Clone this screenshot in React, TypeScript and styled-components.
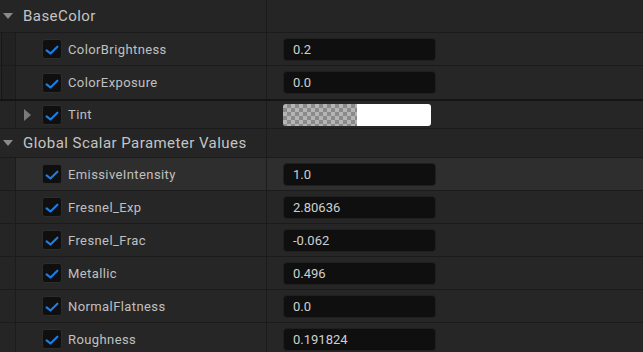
import React from "react";
import styled, { createGlobalStyle } from "styled-components";

const Global = createGlobalStyle`
  html, body { margin: 0; padding: 0; background: #242424; }
  * { box-sizing: border-box; }
`;

const Panel = styled.div`
  width: 643px;
  height: 352px;
  overflow: hidden;
  background: #242424;
  font-family: Roboto, "Noto Sans", "Liberation Sans", sans-serif;
  display: flex;
  flex-direction: column;
`;

const Row = styled.div<{ $h: number; $hl?: boolean; $bw?: number; $header?: boolean }>`
  flex: 0 0 auto;
  display: grid;
  grid-template-columns: 266px 1px 1fr;
  height: ${(p) => p.$h}px;
  background: ${(p) => (p.$header ? "#252525" : p.$hl ? "#2e2e2e" : "#262626")};
  border-bottom: ${(p) => p.$bw ?? 1}px solid ${(p) => ((p.$bw ?? 1) > 1 ? "#141414" : "#1b1b1b")};
`;

const Divider = styled.div`
  background: #1b1b1b;
`;

const HeaderName = styled.div`
  display: flex;
  align-items: center;
  padding-left: 3px;
  gap: 10px;
  color: #c4c4c4;
  font-size: 15px;
  letter-spacing: 0.45px;
`;

const NameCell = styled.div`
  display: flex;
  align-items: stretch;
`;

const Gutter = styled.div<{ $boxed?: boolean }>`
  flex: 0 0 auto;
  width: ${(p) => (p.$boxed ? 15 : 16)}px;
  margin-left: ${(p) => (p.$boxed ? 1 : 0)}px;
  border-right: 1px solid #1b1b1b;
  border-left: ${(p) => (p.$boxed ? "1px solid #161616" : "none")};
  background: ${(p) => (p.$boxed ? "#222222" : "#252525")};
`;

const Expander = styled.div`
  flex: 0 0 26px;
  display: flex;
  align-items: center;
  padding-left: 8px;
`;

const Label = styled.div`
  display: flex;
  align-items: center;
  gap: 6px;
  color: #c0c0c0;
  font-size: 13px;
  letter-spacing: 0.4px;
`;

const CheckBox = styled.div`
  width: 20px;
  height: 20px;
  border-radius: 3px;
  background: #0f0f0f;
  border: 1px solid #2c2c2c;
  display: flex;
  align-items: center;
  justify-content: center;
`;

const ValueCell = styled.div`
  display: flex;
  align-items: center;
  padding-left: 16px;
`;

const Field = styled.div`
  width: 153px;
  height: 23px;
  border-radius: 4px;
  background: #0f0f0f;
  border: 1px solid #1f1f1f;
  color: #cfcfcf;
  font-size: 13px;
  display: flex;
  align-items: center;
  padding-left: 9px;
`;

const Swatch = styled.div`
  width: 148px;
  height: 22px;
  border-radius: 3px;
  overflow: hidden;
  display: grid;
  grid-template-columns: 1fr 1fr;
`;

const Checker = styled.div`
  background-color: #b4b4b4;
  background-image:
    linear-gradient(45deg, #8a8a8a 25%, transparent 25%, transparent 75%, #8a8a8a 75%),
    linear-gradient(45deg, #8a8a8a 25%, transparent 25%, transparent 75%, #8a8a8a 75%);
  background-size: 8px 8px;
  background-position: 0 0, 4px 4px;
`;

const White = styled.div`
  background: #ffffff;
`;

const Check = () => (
  <svg width="20" height="20" viewBox="0 0 20 20">
    <path d="M4 11.5 L8.3 15 L16 7.5" fill="none" stroke="#1f7de6" strokeWidth="2.4" strokeLinecap="round" strokeLinejoin="round" />
  </svg>
);

const DownTri = () => (
  <svg width="10" height="6" viewBox="0 0 10 6">
    <path d="M0 0 L10 0 L5 6 Z" fill="#8a8a8a" />
  </svg>
);

const RightTri = () => (
  <svg width="7" height="12" viewBox="0 0 7 12">
    <path d="M0 0 L7 6 L0 12 Z" fill="#7a7a7a" />
  </svg>
);

type Item = { name: string; value: string; hl?: boolean };

const globals: Item[] = [
  { name: "EmissiveIntensity", value: "1.0", hl: true },
  { name: "Fresnel_Exp", value: "2.80636" },
  { name: "Fresnel_Frac", value: "-0.062" },
  { name: "Metallic", value: "0.496" },
  { name: "NormalFlatness", value: "0.0" },
  { name: "Roughness", value: "0.191824" },
];

const Header = ({ title, h }: { title: string; h: number }) => (
  <Row $h={h} $header>
    <HeaderName>
      <DownTri />
      <span>{title}</span>
    </HeaderName>
    <Divider />
    <div />
  </Row>
);

const ParamRow = ({
  item,
  h = 33,
  boxed,
  bw,
  expandable,
  children,
}: {
  item: Item;
  h?: number;
  boxed?: boolean;
  bw?: number;
  expandable?: boolean;
  children?: React.ReactNode;
}) => (
  <Row $h={h} $hl={item.hl} $bw={bw}>
    <NameCell>
      <Gutter $boxed={boxed} />
      <Expander>{expandable && <RightTri />}</Expander>
      <Label>
        <CheckBox>
          <Check />
        </CheckBox>
        <span>{item.name}</span>
      </Label>
    </NameCell>
    <Divider />
    <ValueCell>{children ?? <Field>{item.value}</Field>}</ValueCell>
  </Row>
);

export default function App() {
  return (
    <>
      <Global />
      <Panel>
        <Header title="BaseColor" h={33} />
        <ParamRow item={{ name: "ColorBrightness", value: "0.2" }} boxed />
        <ParamRow item={{ name: "ColorExposure", value: "0.0" }} boxed h={35} bw={2} />
        <ParamRow item={{ name: "Tint", value: "" }} h={28} expandable>
          <Swatch>
            <Checker />
            <White />
          </Swatch>
        </ParamRow>
        <Header title="Global Scalar Parameter Values" h={29} />
        {globals.map((g) => (
          <ParamRow key={g.name} item={g} />
        ))}
      </Panel>
    </>
  );
}
